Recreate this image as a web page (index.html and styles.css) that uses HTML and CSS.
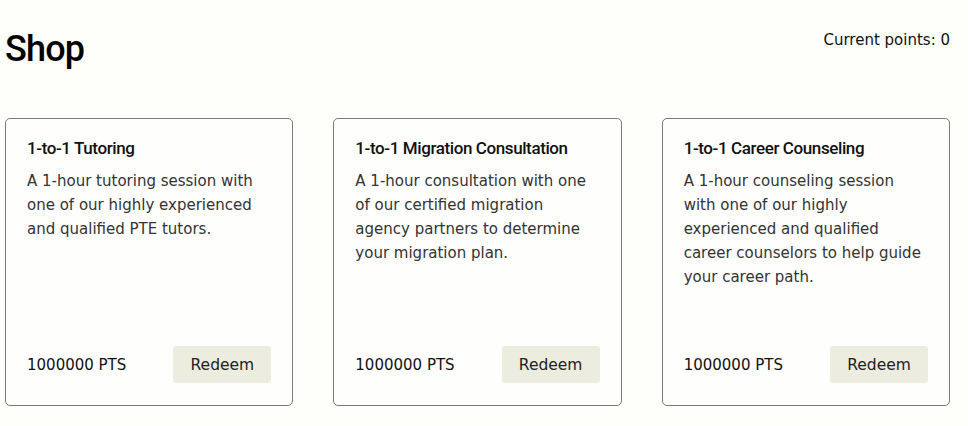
FILE: index.html
```html
<!DOCTYPE html>
<html lang="en">
<head>
	<meta charset="UTF-8">
	<title>Shop</title>
	<link rel="stylesheet" href="styles.css">
</head>
<body>
	<div class="page">
		<div class="top">
			<h1 class="title">Shop</h1>
			<div class="points">Current points: 0</div>
		</div>
		<div class="items">
			<div class="item">
				<div class="item-text">
					<h2>1-to-1 Tutoring</h2>
					<p>A 1-hour tutoring session with one of our highly experienced and qualified PTE tutors.</p>
				</div>
				<div class="item-foot">
					<span class="price">1000000 PTS</span>
					<button class="redeem">Redeem</button>
				</div>
			</div>
			<div class="item">
				<div class="item-text">
					<h2>1-to-1 Migration Consultation</h2>
					<p>A 1-hour consultation with one of our certified migration agency partners to determine your migration plan.</p>
				</div>
				<div class="item-foot">
					<span class="price">1000000 PTS</span>
					<button class="redeem">Redeem</button>
				</div>
			</div>
			<div class="item">
				<div class="item-text">
					<h2>1-to-1 Career Counseling</h2>
					<p>A 1-hour counseling session with one of our highly experienced and qualified career counselors to help guide your career path.</p>
				</div>
				<div class="item-foot">
					<span class="price">1000000 PTS</span>
					<button class="redeem">Redeem</button>
				</div>
			</div>
		</div>
	</div>
</body>
</html>
```

FILE: styles.css
```css
*{
	margin:0;
	padding:0;
	box-sizing:border-box;
}
body{
	background:#fefefa;
	font-family:"DejaVu Sans",sans-serif;
	color:#222;
}
.page{
	padding:24px 18px 0 5px;
}
.top{
	display:flex;
	justify-content:space-between;
	align-items:flex-start;
}
.title{
	font-family:Roboto,sans-serif;
	font-weight:500;
	font-size:36px;
	line-height:50px;
	color:#000;
	letter-spacing:-0.8px;
}
.points{
	font-size:15px;
	line-height:20px;
	padding-top:6px;
	color:#111;
}
.items{
	display:grid;
	grid-template-columns:repeat(3,1fr);
	gap:40px;
	margin-top:44px;
}
.item{
	height:288px;
	border:1px solid #7a7a72;
	border-radius:5px;
	padding:18px 21px 22px 21px;
	display:flex;
	flex-direction:column;
	justify-content:space-between;
	background:#fefefc;
}
.item h2{
	font-family:Roboto,sans-serif;
	font-weight:500;
	font-size:17px;
	line-height:22px;
	color:#111;
	letter-spacing:-0.4px;
}
.item p{
	margin-top:10px;
	font-size:15px;
	line-height:24px;
	color:#333;
}
.item-foot{
	display:flex;
	justify-content:space-between;
	align-items:center;
}
.price{
	font-size:15px;
	color:#111;
}
.redeem{
	width:98px;
	height:37px;
	border:none;
	border-radius:3px;
	background:#ececdf;
	font-family:"DejaVu Sans",sans-serif;
	font-size:15.5px;
	color:#222;
}
```
